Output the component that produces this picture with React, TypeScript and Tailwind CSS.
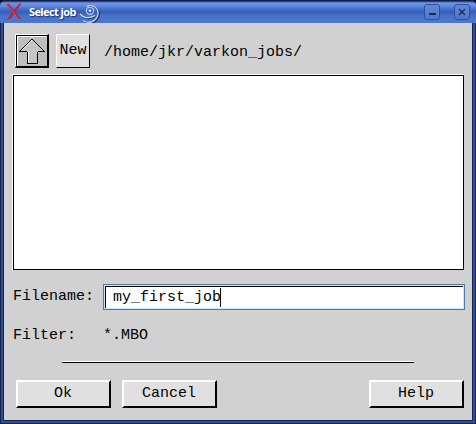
import type { ReactNode } from 'react';

function TitleButton({ children }: { children: ReactNode }) {
  return (
    <button className="flex h-4 w-4 items-center justify-center rounded-[3px] border border-[#2c509f] bg-gradient-to-b from-[#6388d4] to-[#4d78c8]">
      {children}
    </button>
  );
}

function MotifButton({ label }: { label: string }) {
  return (
    <button className="h-7 w-[95px] border-2 border-t-white border-l-white border-r-black border-b-black bg-[#e0e0e0] text-center leading-[22px]">
      <span className="-ml-px block">{label}</span>
    </button>
  );
}

function TitleBar() {
  return (
    <header className="flex h-[23px] shrink-0 items-start rounded-t-[5px] border-t border-[#0c1c4c] bg-[linear-gradient(to_bottom,#142a68_0px,#6f98e8_2px,#6189df_5px,#3d68c4_9px,#3560b8_11px,#4772c6_15px,#4d78cc_22px)] pl-[6px]">
      <svg width="16" height="17" viewBox="0 0 16 17" className="mt-[2px] shrink-0">
        <path d="M0 1H3L15 16H12.500Z" fill="#b81a30" />
        <path d="M13 .8L15.500 .5L4.500 15.500L1 16.500Z" fill="#d81825" />
        <path d="M1.200 1.300L12.500 15.500" stroke="#e07888" strokeWidth=".6" />
      </svg>
      <h1 className="ml-[6px] w-[50px] whitespace-nowrap pt-[3px] pl-px font-['Open_Sans',sans-serif] text-[11px] leading-4 font-bold tracking-[-0.6px] text-white [text-shadow:1px_1px_1px_#173373]">
        Select job
      </h1>
      <svg width="22" height="19" viewBox="0 0 22 19" className="mt-[4px] ml-[1px]" fill="none">
        <path d="M8 1.500C12 -.5 17 1 18.500 5C20.500 10 17 16 12 17C9 17.800 6 17 4 15.500" stroke="#1d397a" strokeWidth="1.800" transform="translate(1 .7)" />
        <path d="M8 1.500C12 -.5 17 1 18.500 5C20.500 10 17 16 12 17C9 17.800 6 17 4 15.500" stroke="#c3cce0" strokeWidth="1.400" />
        <path d="M1 9C4 13 10 14 16 10.500" stroke="#1d397a" strokeWidth="1.400" transform="translate(.5 .8)" />
        <path d="M1 9C4 13 10 14 16 10.500" stroke="#d3d9e8" strokeWidth="1.300" />
        <circle cx="11" cy="5.800" r="3.600" stroke="#c3cce0" strokeWidth="1.100" />
        <circle cx="11" cy="5.800" r="1.300" fill="#dce3f2" />
      </svg>
      <div className="mt-[3px] mr-[6px] ml-auto flex gap-[14px]">
        <TitleButton>
          <span className="mt-1 h-0.5 w-[7px] bg-[#182954]" />
        </TitleButton>
        <TitleButton>
          <svg width="8" height="8" viewBox="0 0 8 8" stroke="#182954" strokeWidth="1.400">
            <path d="M1 1L7 7M7 1L1 7" />
          </svg>
        </TitleButton>
      </div>
    </header>
  );
}

export default function App() {
  return (
    <div className="h-[424px] w-[476px] bg-[#080e20]">
      <div className="flex h-full w-full flex-col overflow-hidden rounded-t-[5px] bg-[#314f92] font-['Liberation_Mono',monospace] text-[15px] leading-[18px] text-black">
        <TitleBar />
        <div className="flex min-h-0 flex-1 border-x border-b border-[#142453] px-[2px] pb-[2px]">
          <main className="flex min-w-0 flex-1 flex-col border-x border-b border-[#142453] bg-[#d1d1d1] pr-[7px] pl-[9px]">
            <div className="mt-[11px] ml-[2px] flex h-[34px] items-center">
              <button className="h-[34px] w-[34px] border-t border-r-2 border-b-2 border-l border-t-white border-r-black border-b-black border-l-white bg-black pt-px pl-px">
                <svg width="30" height="30" viewBox="0 0 30 30" className="block border-t border-l border-white bg-[#bebebe]" shapeRendering="crispEdges">
                  <path d="M14.500 2.500L27.500 15.500H20.500V27.500H9.500V15.500H1.500Z" fill="#c5c5c5" stroke="#000" />
                  <path d="M14.500 3.500L3.500 14.500M10.500 16V26.500" fill="none" stroke="#fff" />
                </svg>
              </button>
              <button className="ml-[7px] h-[34px] w-[34px] border border-t-white border-l-white border-r-black border-b-black bg-[#e0e0e0] text-center">
                <span className="block">New</span>
              </button>
              <span className="ml-[14px] pt-[3px]">/home/jkr/varkon_jobs/</span>
            </div>
            <div className="mt-[6px] -ml-px h-[196px] w-[452px] border-t border-l border-white">
              <div className="h-full w-full border border-black bg-white" />
            </div>
            <label className="mt-[14px] flex h-[26px] items-center">
              <span className="w-[90px] pb-px">Filename:</span>
              <span className="flex h-[26px] w-[362px] border border-[#4d7ba8] bg-[#c9e7fa] p-px">
                <span className="flex flex-1 items-center border-t border-l border-black bg-white pl-[7px]">
                  my_first_job
                  <span className="-ml-px h-[19px] w-px bg-black" />
                </span>
              </span>
            </label>
            <div className="mt-[17px] flex">
              <span className="w-[90px]">Filter:</span>
              <span>*.MBO</span>
            </div>
            <hr className="mt-[16px] ml-[49px] h-[2px] w-[352px] border-t border-b border-t-white border-b-black" />
            <footer className="mt-[17px] mr-px ml-[3px] flex">
              <MotifButton label="Ok" />
              <div className="ml-[11px]">
                <MotifButton label="Cancel" />
              </div>
              <div className="ml-auto">
                <MotifButton label="Help" />
              </div>
            </footer>
          </main>
        </div>
      </div>
    </div>
  );
}
